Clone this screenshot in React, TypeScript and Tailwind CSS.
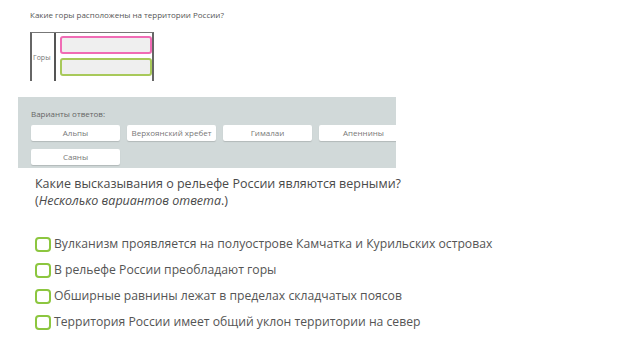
import React from "react";

const options = [
  "Вулканизм проявляется на полуострове Камчатка и Курильских островах",
  "В рельефе России преобладают горы",
  "Обширные равнины лежат в пределах складчатых поясов",
  "Территория России имеет общий уклон территории на север",
];

const answers = ["Альпы", "Верхоянский хребет", "Гималаи", "Апеннины", "Саяны"];

export default function App() {
  return (
    <div
      className="w-[640px] h-[360px] bg-white overflow-hidden text-[#4a4a4a]"
      style={{ fontFamily: '"Open Sans", "Noto Sans", sans-serif' }}
    >
      <div className="pl-[30px] pt-[10px]">
        <p className="text-[8px] leading-[10px] text-[#555]">
          Какие горы расположены на территории России?
        </p>
        <div className="mt-[12px] flex w-[124px] h-[49px] border-t border-t-[#777] border-l-2 border-r-2 border-[#666]">
          <div className="w-[24px] border-r-2 border-[#555] flex items-center pl-[1px] pt-[3px]">
            <span className="text-[7px] text-[#777]">Горы</span>
          </div>
          <div className="flex flex-col pl-[4px] pt-[3px] gap-[4px]">
            <div className="w-[92px] h-[18px] rounded-[3px] border-2 border-[#f06cb5] bg-[#efefef]" />
            <div className="w-[92px] h-[18px] rounded-[3px] border-2 border-[#a8c95a] bg-[#efefef]" />
          </div>
        </div>
      </div>

      <div className="ml-[18px] mt-[16px] w-[378px] h-[71px] bg-[#d1d9d9] overflow-hidden pl-[13px] pt-[12px]">
        <p className="text-[8px] leading-[10px] text-[#666]">Варианты ответов:</p>
        <div className="mt-[6px] flex flex-wrap gap-x-[7px] gap-y-[8px] w-[420px]">
          {answers.map((a) => (
            <div
              key={a}
              className="w-[89px] h-[16px] bg-white rounded-[2px] shadow-[0_1px_1px_rgba(0,0,0,0.15)] flex items-center justify-center text-[8px] text-[#777]"
            >
              {a}
            </div>
          ))}
        </div>
      </div>

      <div className="pl-[35px] pt-[7px]">
        <p className="text-[12.5px] leading-[17px] text-[#4a4a4a]">
          Какие высказывания о рельефе России являются верными?
        </p>
        <p className="text-[12.5px] leading-[17px] text-[#4a4a4a]">
          (<i>Несколько вариантов ответа</i>.)
        </p>
        <div className="mt-[27px] flex flex-col gap-[10px]">
          {options.map((o) => (
            <div key={o} className="flex items-center h-[16px] gap-[3px]">
              <span className="w-[16px] h-[15px] rounded-[4px] border-2 border-[#8cc63f] bg-white" />
              <span className="text-[12.2px] leading-[16px] text-[#555]">{o}</span>
            </div>
          ))}
        </div>
      </div>
    </div>
  );
}
